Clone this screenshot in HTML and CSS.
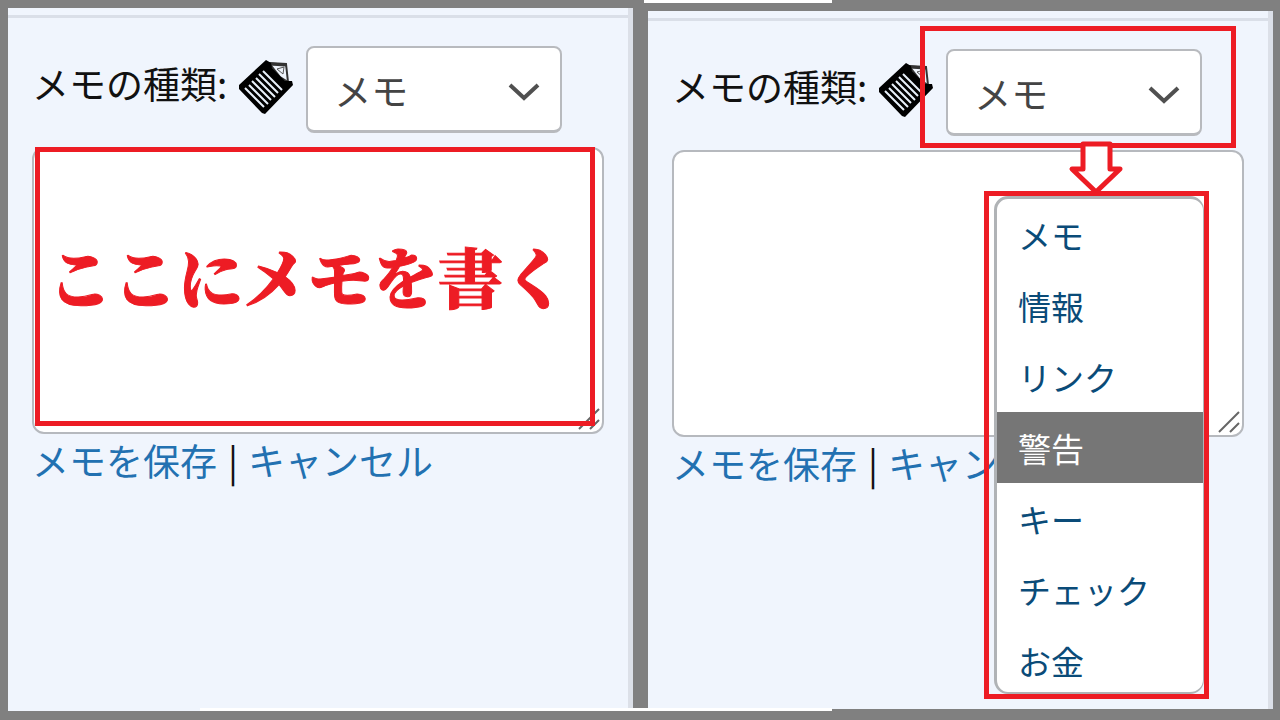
FILE: index.html
```html
<!DOCTYPE html>
<html lang="ja">
<head>
    <meta charset="UTF-8">
    <meta name="viewport" content="width=device-width, initial-scale=1.0">
    <title>メモの書き方</title>
    <link rel="stylesheet" href="styles.css">
</head>
<body>

    <svg class="sprite" aria-hidden="true">
        <symbol id="icon-note" viewBox="0 0 56 56">
            <path d="M31 4 L48 5 L50 23 L42 18 Z" fill="#eef3fb" stroke="#333" stroke-width="2"/>
            <path d="M31 5 L48 6" stroke="#333" stroke-width="3"/>
            <path d="M39 10 L46 8 L45 15 Z" fill="#eef3fb" stroke="#555" stroke-width="1"/>
            <path d="M28 1 L33 4 L34 9 L47 22 L54 22 L55 26 L27 55 L24 54 L1 30 L1 26 Z" fill="#000"/>
            <path d="M25 12 L44 31 M21 15 L40 34 M18 19 L37 38 M14 22 L33 41 M11 26 L30 45 M7 29 L26 48" stroke="#e8f0fa" stroke-width="2"/>
        </symbol>
        <symbol id="icon-grip" viewBox="0 0 22 22">
            <path d="M1 21 L21 1 M12 21 L21 12" fill="none" stroke="#666" stroke-width="2"/>
        </symbol>
    </svg>

    <div class="container">
        <section class="panel">
            <div class="type-row">
                <label for="type-left">メモの種類:</label>
                <svg class="note-icon" aria-hidden="true"><use href="#icon-note"/></svg>
                <div class="select-box">
                    <select id="type-left">
                        <option>メモ</option>
                    </select>
                    <svg class="chevron" viewBox="0 0 32 20" aria-hidden="true"><path d="M2 3 L16 16 L30 3"/></svg>
                </div>
            </div>
            <div class="memo-box">
                <textarea aria-label="メモ"></textarea>
                <svg class="grip" aria-hidden="true"><use href="#icon-grip"/></svg>
                <div class="mark mark-memo">ここにメモを書く</div>
            </div>
            <div class="links"><a href="#">メモを保存</a><span class="sep">|</span><a href="#">キャンセル</a></div>
        </section>

        <section class="panel panel-open">
            <div class="type-row">
                <label for="type-right">メモの種類:</label>
                <svg class="note-icon" aria-hidden="true"><use href="#icon-note"/></svg>
                <div class="select-box">
                    <select id="type-right">
                        <option>メモ</option>
                    </select>
                    <svg class="chevron" viewBox="0 0 32 20" aria-hidden="true"><path d="M2 3 L16 16 L30 3"/></svg>
                    <div class="mark mark-select"></div>
                </div>
            </div>
            <div class="memo-box">
                <textarea aria-label="メモ"></textarea>
                <svg class="grip" aria-hidden="true"><use href="#icon-grip"/></svg>
                <svg class="arrow" viewBox="0 0 60 56" aria-hidden="true"><path d="M17 4 H44 V29 H54 L30 52 L6 29 H17 Z"/></svg>
                <div class="mark mark-menu">
                    <select class="menu" size="7" aria-label="メモの種類">
                        <option>メモ</option>
                        <option>情報</option>
                        <option>リンク</option>
                        <option selected>警告</option>
                        <option>キー</option>
                        <option>チェック</option>
                        <option>お金</option>
                    </select>
                </div>
            </div>
            <div class="links"><a href="#">メモを保存</a><span class="sep">|</span><a href="#">キャンセル</a></div>
        </section>

        <div class="strip strip-top"></div>
        <div class="strip strip-bottom"></div>
    </div>

</body>
</html>
```
FILE: styles.css
```css
* {
    box-sizing: border-box;
}

body {
    margin: 0;
    background-color: #808080;
    color: #111;
    font-family: "Noto Sans CJK JP", sans-serif;
    font-size: 37px;
}

.sprite {
    position: absolute;
    width: 0;
    height: 0;
}

.container {
    position: relative;
    display: grid;
    grid-template-columns: 1fr 1fr;
    gap: 15px;
    min-height: 100vh;
    padding: 8px 7px 9px 8px;
}

.panel {
    min-width: 0;
    padding: 0 24px;
    background-color: #f0f5fd;
    border-right: 5px solid #dce0e8;
}

.panel::before {
    content: "";
    display: block;
    height: 7px;
    margin: 0 -24px;
    border-bottom: 3px solid #dadfe8;
}

.panel-open {
    margin: 3px 0 2px;
}

.type-row {
    display: flex;
    align-items: center;
    padding-top: 28px;
}

.type-row label {
    line-height: 48px;
    padding-bottom: 14px;
    white-space: nowrap;
}

.note-icon {
    flex: none;
    width: 56px;
    height: 56px;
    margin: 0 12px 6px 11px;
}

.select-box {
    position: relative;
    width: 256px;
}

.select-box select {
    display: block;
    width: 100%;
    height: 87px;
    padding: 2px 26px 0;
    appearance: none;
    background-color: #fff;
    border: 2px solid #b8babe;
    border-bottom-width: 3px;
    border-radius: 8px;
    color: #444;
    font: inherit;
}

.chevron {
    position: absolute;
    right: 22px;
    top: 36px;
    width: 32px;
    height: 20px;
    fill: none;
    stroke: #505050;
    stroke-width: 4;
    pointer-events: none;
}

.memo-box {
    position: relative;
    margin-top: 14px;
}

textarea {
    display: block;
    width: 100%;
    height: 287px;
    padding: 12px;
    resize: none;
    background-color: #fff;
    border: 2px solid #b6b9be;
    border-radius: 12px;
    font: inherit;
}

.grip {
    position: absolute;
    right: 4px;
    bottom: 4px;
    width: 22px;
    height: 22px;
}

.links {
    padding-top: 2px;
    line-height: 48px;
    white-space: nowrap;
}

.links a {
    color: #2271b1;
    text-decoration: none;
}

.sep {
    margin: 0 10px 0 11px;
}

/* red marks over the screens */
.mark {
    position: absolute;
    border: 5px solid #ed1c24;
    pointer-events: none;
}

.mark-memo {
    top: 0;
    right: 9px;
    bottom: 8px;
    left: 3px;
    display: flex;
    align-items: center;
    padding: 0 0 24px 8px;
    color: #ed1c24;
    font-family: "Noto Serif CJK JP", "Noto Sans CJK JP", serif;
    font-size: 65px;
    font-weight: 900;
    line-height: 80px;
    white-space: nowrap;
    -webkit-text-stroke: 1px #ed1c24;
}

.mark-select {
    top: -23px;
    right: -34px;
    bottom: -12px;
    left: -26px;
}

.arrow {
    position: absolute;
    top: -10px;
    right: 118px;
    width: 60px;
    height: 56px;
    fill: #fff;
    stroke: #ed1c24;
    stroke-width: 5;
    stroke-linejoin: round;
}

.mark-menu {
    top: 41px;
    right: 35px;
    width: 225px;
    height: 508px;
    padding-left: 5px;
    pointer-events: auto;
    z-index: 1;
}

.menu {
    display: block;
    width: 100%;
    height: 498px;
    padding: 0;
    overflow: hidden;
    appearance: none;
    background-color: #fff;
    border: 3px solid #b0b3b6;
    border-right-width: 1px;
    border-bottom-width: 2px;
    border-radius: 14px;
    outline: none;
    font: inherit;
    font-size: 33px;
}

.menu option {
    height: 71px;
    padding: 12px 21px 0;
    color: #0a4b78;
}

.menu option:checked {
    background: linear-gradient(#767676, #767676);
    color: #fff;
}

/* slivers of the page behind */
.strip {
    position: absolute;
    height: 3px;
    background-color: #fff;
}

.strip-top {
    top: 0;
    left: 644px;
    width: 188px;
}

.strip-bottom {
    bottom: 9px;
    left: 200px;
    width: 632px;
}
```
